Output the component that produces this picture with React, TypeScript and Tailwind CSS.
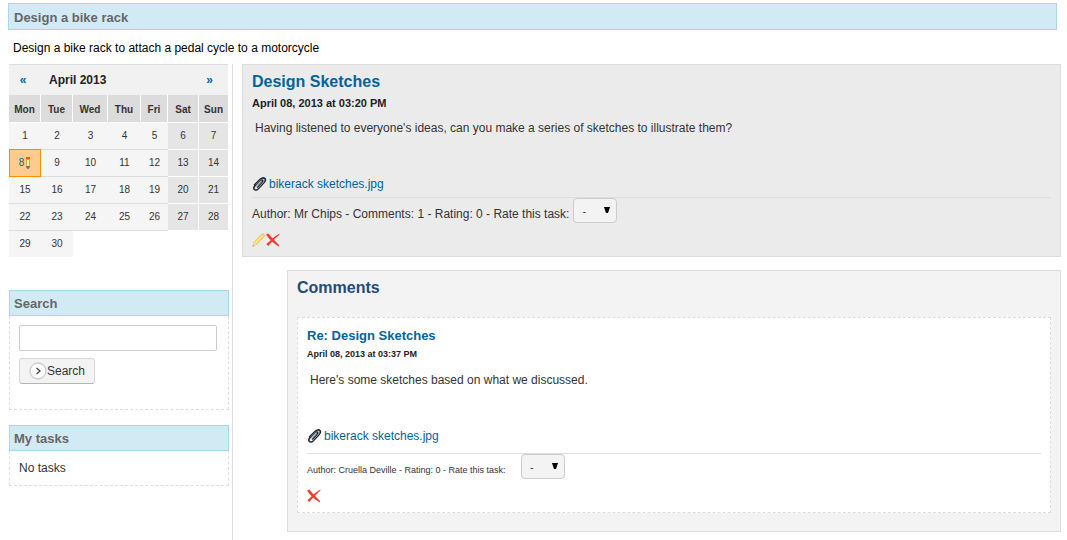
import React from "react";

const weeks: (number | null)[][] = [
  [1, 2, 3, 4, 5, 6, 7],
  [8, 9, 10, 11, 12, 13, 14],
  [15, 16, 17, 18, 19, 20, 21],
  [22, 23, 24, 25, 26, 27, 28],
  [29, 30, null, null, null, null, null],
];

const days = [
  { name: "Mon", width: "w-[32px]" },
  { name: "Tue", width: "w-[32px]" },
  { name: "Wed", width: "w-[35px]" },
  { name: "Thu", width: "w-[33px]" },
  { name: "Fri", width: "w-[27px]" },
  { name: "Sat", width: "w-[31px]" },
  { name: "Sun", width: "w-[29px]" },
];

function cellStyle(week: number, day: number) {
  if (day === 5) return "border-t border-r border-white bg-[#e5e5e5] p-0";
  if (day === 6) return "border-t border-white bg-[#e5e5e5] p-0";
  if (week === 0) return "border-t border-white bg-[#f5f5f5] p-0";
  if (week === 2 && day === 0) return "border-t border-[#ff8c00] bg-[#f5f5f5] p-0";
  return "border-t border-[#ddd] bg-[#f5f5f5] p-0";
}

function PencilMarker() {
  return (
    <svg viewBox="0 0 6 12" className="h-3 w-1.5 shrink-0" aria-hidden="true">
      <path d="M1 2h4v7H1z" fill="#cbb03c" />
      <path d="M1 0h4v2H1z" fill="#e8610a" />
      <path d="M2 3h2v6H2z" fill="#fff6a8" />
      <path d="M1 9h4v1L3.500 12h-1L1 10z" fill="#74716a" />
    </svg>
  );
}

function Paperclip() {
  return (
    <svg viewBox="0 0 16 16" className="size-4 shrink-0" aria-hidden="true">
      <g fill="none" strokeLinecap="round" strokeLinejoin="round" transform="translate(-.6 .3)">
        <path
          d="M3.200 8.600 8.800 2.900c1.500-1.500 3.700-1.700 4.700-.6 1 1.100.5 2.400-.6 3.600l-6 6.500c-1.100 1.200-2.900 1.800-3.900.8-1-1.100-.6-2.400.4-3.500l5.400-5.600c.8-.8 1.900-.9 2.300-.3.500.6.1 1.300-.5 2L6.200 10.600"
          stroke="#1c2530"
          strokeWidth="1.600"
        />
        <path d="M4.600 8.200 9.500 3.300M4.400 11.600l5.600-5.700M6 12.600l6.300-6.800" stroke="#aab6c2" strokeWidth=".7" />
      </g>
    </svg>
  );
}

function EditIcon() {
  return (
    <svg viewBox="0 0 14 14" className="size-3.5" aria-hidden="true">
      <path d="M.6 13.400 2 9.200 9.600 1.200q1.400-1 2.500.1 1.100 1.100.1 2.300L4.600 11.600z" fill="#f8cf62" stroke="#eeb65a" strokeWidth=".6" />
      <path d="M3 9.300 10.300 1.900l1 .8L4 10.200z" fill="#ffe99a" />
      <path d="M.6 13.400 2 9.200l2.600 2.400z" fill="#f7dfba" />
      <path d="m.6 13.400.6-1.600 1 1z" fill="#a58d6e" />
    </svg>
  );
}

function DeleteIcon() {
  return (
    <svg viewBox="0 0 14 14" className="size-3.5" aria-hidden="true">
      <path d="M0 1.500 2.400.5C4.700 3.500 8.700 7.400 13.200 12.300l-.3 1.300C8.300 10.600 3.300 6.800 0 1.500z" fill="#f53c2c" />
      <path d="M.3 11.300C3.900 8.100 8 3.500 13.200.8l.4.7C9.900 4.500 5.900 8.700 2.300 13z" fill="#f53c2c" />
    </svg>
  );
}

function Calendar() {
  return (
    <table className="w-[219px] table-fixed border-separate border-spacing-0 text-center text-[10px] leading-4 text-[#333]">
      <colgroup>
        {days.map((d) => (
          <col key={d.name} className={d.width} />
        ))}
      </colgroup>
      <thead>
        <tr className="h-[31px]">
          <th className="border-t border-[#ddd] bg-[#f1f1f1] p-0 pr-1 text-[12px]">
            <a href="#previous" aria-label="Previous month" className="text-[#00649c]">«</a>
          </th>
          <th colSpan={5} className="border-t border-[#ddd] bg-[#f1f1f1] p-0 pl-2 text-left text-[12px] text-[#222]">
            April 2013
          </th>
          <th className="border-t border-[#ddd] bg-[#f1f1f1] p-0 pr-2 text-[12px]">
            <a href="#next" aria-label="Next month" className="text-[#00649c]">»</a>
          </th>
        </tr>
        <tr className="h-[27px]">
          {days.map((d) => (
            <th key={d.name} className="border-r border-white bg-[#dcdcdc] p-0 pt-0.5 text-[10px] last:border-r-0">
              {d.name}
            </th>
          ))}
        </tr>
      </thead>
      <tbody>
        {weeks.map((week, w) => (
          <tr key={w} className="h-[27px]">
            {week.map((day, i) => {
              if (day === null)
                return <td key={i} className={i < 5 ? "border-t border-[#ddd] p-0" : "p-0"} />;
              if (day === 8)
                return (
                  <td key={i} className="border border-b-0 border-[#ff8c00] bg-[#ffcb8f] p-0">
                    <a href="#day-8" className="flex items-center justify-center gap-px text-[#00649c]">
                      <span>8</span>
                      <PencilMarker />
                    </a>
                  </td>
                );
              return (
                <td key={i} className={cellStyle(w, i)}>{day}</td>
              );
            })}
          </tr>
        ))}
      </tbody>
    </table>
  );
}

function PanelTitle({ children }: { children: React.ReactNode }) {
  return (
    <h2 className="border border-[#a8d8e8] bg-[#d2eaf3] px-1 pt-[5px] pb-[3px] text-[13px] leading-4 font-bold text-[#666]">
      {children}
    </h2>
  );
}

function RatingSelect({ id }: { id: string }) {
  return (
    <span className="relative inline-flex">
      <select
        id={id}
        defaultValue="-"
        className="h-[25px] w-11 appearance-none rounded border border-[#ccc] bg-[#f3f3f3] pl-2 text-[11px] text-[#333]"
      >
        <option>-</option>
        <option>1</option>
        <option>2</option>
        <option>3</option>
        <option>4</option>
        <option>5</option>
      </select>
      <svg viewBox="0 0 6 6" className="pointer-events-none absolute top-[9px] right-[7px] size-1.5" aria-hidden="true">
        <path d="M0 0h6L4 6H2z" fill="#000" />
      </svg>
    </span>
  );
}

function Attachment() {
  return (
    <a href="#attachment" className="flex items-center leading-4 text-[#00649c]">
      <Paperclip />
      <span className="pl-px">bikerack sketches.jpg</span>
    </a>
  );
}

export default function App() {
  return (
    <div className="flex min-h-screen flex-col bg-white pt-[3px] font-['Liberation_Sans',Arial,sans-serif] text-[12px] leading-4 text-[#333]">
      <h1 className="mr-2.5 ml-2 border border-[#a8d8e8] bg-[#d2eaf3] px-[5px] pt-1.5 pb-[3px] text-[13px] leading-4 font-bold text-[#666]">
        Design a bike rack
      </h1>
      <p className="px-[13px] pt-2.5 pb-2 text-black">Design a bike rack to attach a pedal cycle to a motorcycle</p>

      <div className="flex grow pr-1.5 pl-[9px]">
        <aside className="w-56 shrink-0 border-r border-[#ddd] pr-[3px]">
          <Calendar />
          <section className="mt-[33px]">
            <PanelTitle>Search</PanelTitle>
            <form
              className="border border-t-0 border-dashed border-[#ddd] px-[9px] pt-[9px] pb-[25px]"
              onSubmit={(e) => e.preventDefault()}
            >
              <input
                type="text"
                aria-label="Search"
                className="block h-[26px] w-[198px] rounded-xs border border-[#ccc] bg-white px-1"
              />
              <button
                type="submit"
                className="mt-[7px] flex h-[26px] items-center rounded-[3px] border border-[#d8d8d8] border-b-[#b5b5b5] bg-[#f3f3f3] px-[9px]"
              >
                <svg viewBox="0 0 18 18" className="size-[18px]" aria-hidden="true">
                  <circle cx="9" cy="9" r="8" fill="#fcfcfc" stroke="#ccc" strokeWidth="1.300" />
                  <path d="m7.500 6 3.500 3-3.500 3" fill="none" stroke="#444" strokeWidth="1.300" />
                </svg>
                Search
              </button>
            </form>
          </section>
          <section className="mt-[15px]">
            <PanelTitle>My tasks</PanelTitle>
            <p className="border border-t-0 border-dashed border-[#ddd] p-[9px]">No tasks</p>
          </section>
        </aside>

        <main className="ml-[9px] min-w-0 grow pb-2">
          <article className="border border-[#ddd] bg-[#ebebeb] px-[9px] pt-[5px] pb-[9px]">
            <h2 className="text-[16px] leading-6 font-bold">
              <a href="#task" className="text-[#00649c]">Design Sketches</a>
            </h2>
            <p className="pt-px text-[11px] leading-4 font-bold text-[#222]">April 08, 2013 at 03:20 PM</p>
            <p className="px-[3px] pt-[9px] pb-10">
              Having listened to everyone's ideas, can you make a series of sketches to illustrate them?
            </p>
            <Attachment />
            <div className="mt-[5px] flex items-center gap-1 border-t border-[#ddd]">
              <label htmlFor="task-rating" className="pt-1.5">
                Author: Mr Chips - Comments: 1 - Rating: 0 - Rate this task:
              </label>
              <RatingSelect id="task-rating" />
            </div>
            <div className="mt-[10px] flex">
              <button type="button" aria-label="Edit"><EditIcon /></button>
              <button type="button" aria-label="Delete"><DeleteIcon /></button>
            </div>
          </article>

          <section className="mt-[13px] ml-[45px] border border-[#ddd] bg-[#f3f3f3] px-[9px] pt-[5px] pb-[18px]">
            <h2 className="text-[16px] leading-6 font-bold text-[#264b78]">Comments</h2>
            <article className="mt-[17px] border border-dashed border-[#ddd] bg-white px-[9px] pt-2 pb-[9px]">
              <h3 className="text-[13px] leading-5 font-bold">
                <a href="#comment" className="text-[#00649c]">Re: Design Sketches</a>
              </h3>
              <p className="text-[9px] leading-4 font-bold text-[#222]">April 08, 2013 at 03:37 PM</p>
              <p className="px-[3px] pt-[10px] pb-10">Here's some sketches based on what we discussed.</p>
              <Attachment />
              <div className="mt-[9px] flex items-center gap-1 border-t border-[#ddd]">
                <label htmlFor="comment-rating" className="min-w-[210px] pt-1.5 text-[9px]">
                  Author: Cruella Deville - Rating: 0 - Rate this task:
                </label>
                <RatingSelect id="comment-rating" />
              </div>
              <button type="button" aria-label="Delete comment" className="mt-[10px] block"><DeleteIcon /></button>
            </article>
          </section>
        </main>
      </div>
    </div>
  );
}
